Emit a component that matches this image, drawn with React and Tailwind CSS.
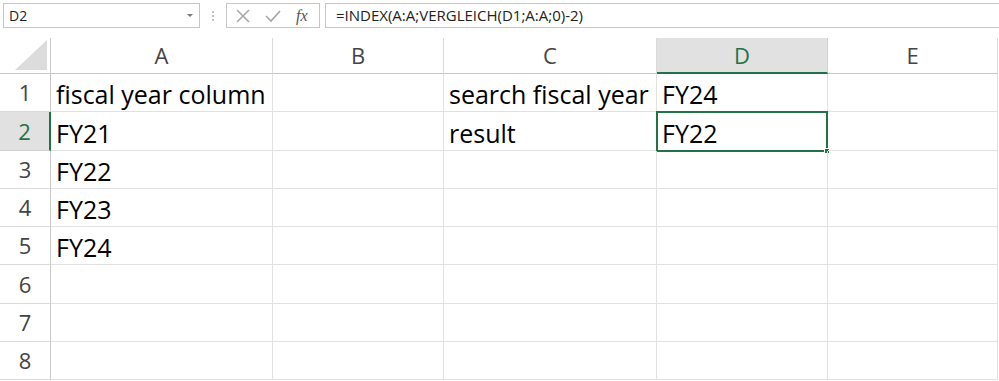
import React from "react";

const cols = ["A", "B", "C", "D", "E"];
const rows = [
  ["fiscal year column", "", "search fiscal year", "FY24", ""],
  ["FY21", "", "result", "FY22", ""],
  ["FY22", "", "", "", ""],
  ["FY23", "", "", "", ""],
  ["FY24", "", "", "", ""],
  ["", "", "", "", ""],
  ["", "", "", "", ""],
  ["", "", "", "", ""],
];

const FormulaBar = () => (
  <div className="flex h-[38px] items-start gap-0 bg-white pt-[3px] text-[14px] text-[#222]">
    <div className="ml-[3px] flex h-[25px] w-[197px] items-center justify-between border border-[#c6c6c6] pl-[5px] pr-[6px]">
      <span>D2</span>
      <span className="h-0 w-0 border-x-[3px] border-t-[3px] border-x-transparent border-t-[#777]"></span>
    </div>
    <div className="ml-[12px] mt-[8px] flex h-[10px] w-[3px] flex-col justify-between">
      <span className="h-[2px] w-[2px] bg-[#c0c0c0]"></span>
      <span className="h-[2px] w-[2px] bg-[#c0c0c0]"></span>
      <span className="h-[2px] w-[2px] bg-[#c0c0c0]"></span>
    </div>
    <div className="ml-[11px] flex h-[25px] w-[94px] items-center border border-[#c6c6c6]">
      <svg width="16" height="16" viewBox="0 0 16 16" className="ml-[8px]">
        <path d="M2 2 L14 14 M14 2 L2 14" stroke="#a6a6a6" strokeWidth="1.5" fill="none" />
      </svg>
      <svg width="18" height="16" viewBox="0 0 18 16" className="ml-[13px]">
        <path d="M2 8 L7 13 L16 3" stroke="#a6a6a6" strokeWidth="1.6" fill="none" />
      </svg>
      <span className="ml-[14px] font-['Liberation_Serif',serif] text-[16px] italic text-[#555]">
        fx
      </span>
    </div>
    <div className="ml-[5px] flex h-[25px] flex-1 items-center border-y border-l border-[#c6c6c6] pl-[10px] text-[15px]">
      =INDEX(A:A;VERGLEICH(D1;A:A;0)-2)
    </div>
  </div>
);

const App = () => {
  return (
    <div className="h-[381px] w-[999px] overflow-hidden bg-white font-['Open_Sans','Liberation_Sans',sans-serif]">
      <FormulaBar />
      <div className="grid grid-cols-[51px_222px_171px_213px_171px_170px] grid-rows-[36px_38px_39px_38px_38px_38px_39px_38px_38px]">
        <div className="relative border-r border-b border-[#c8c8c8]">
          <svg width="32" height="30" className="absolute bottom-[3px] right-[3px]">
            <polygon points="32,0 32,30 0,30" fill="#dcdcdc" />
          </svg>
        </div>
        {cols.map((c) => (
          <div
            key={c}
            className={
              c === "D"
                ? "flex items-center justify-center border-r border-b-2 border-r-[#d0d0d0] border-b-[#217346] bg-[#e1e1e1] text-[22px] text-[#217346]"
                : "flex items-center justify-center border-r border-b border-r-[#dadada] border-b-[#c8c8c8] text-[22px] text-[#444]"
            }
          >
            {c}
          </div>
        ))}
        {rows.map((r, i) => (
          <React.Fragment key={i}>
            <div
              className={
                i === 1
                  ? "flex items-center justify-center border-r-2 border-b border-r-[#217346] border-b-[#d0d0d0] bg-[#e1e1e1] text-[22px] text-[#217346]"
                  : "flex items-center justify-center border-r border-b border-r-[#c8c8c8] border-b-[#dadada] text-[22px] text-[#444]"
              }
            >
              {i + 1}
            </div>
            {r.map((v, j) => (
              <div
                key={j}
                className="relative flex items-end overflow-visible whitespace-nowrap border-r border-b border-[#e1e1e1] pb-[1px] pl-[5px] text-[25px] leading-[32px] text-black"
              >
                {v}
                {i === 1 && j === 3 && (
                  <div className="absolute -left-[1px] -top-[1px] h-[41px] w-[172px] border-2 border-[#217346]">
                    <span className="absolute -bottom-[4px] -right-[4px] h-[6px] w-[6px] border border-white bg-[#217346]"></span>
                  </div>
                )}
              </div>
            ))}
          </React.Fragment>
        ))}
      </div>
    </div>
  );
};

export default App;
